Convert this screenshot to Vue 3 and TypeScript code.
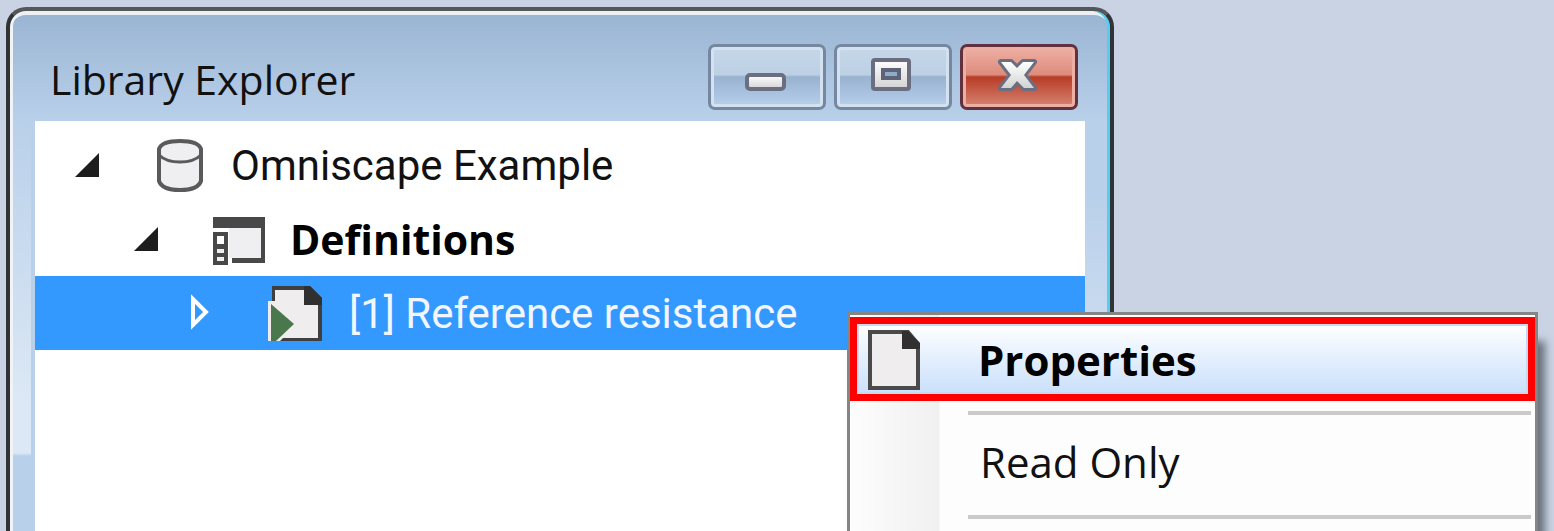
<script setup lang="ts">
import { ref } from 'vue'

type NodeKind = 'library' | 'definitions' | 'scenario'

interface TreeNode {
  id: number
  kind: NodeKind
  label: string
  expanded: boolean
}

const nodes = ref<TreeNode[]>([
  { id: 1, kind: 'library', label: 'Omniscape Example', expanded: true },
  { id: 2, kind: 'definitions', label: 'Definitions', expanded: true },
  { id: 3, kind: 'scenario', label: '[1] Reference resistance', expanded: false },
])
const selected = ref(3)
</script>

<template>
  <main class="desktop">
    <section class="window" aria-label="Library Explorer">
      <header class="titlebar">
        <h1 class="title">Library Explorer</h1>
        <div class="controls">
          <button class="control" type="button" aria-label="Minimize">
            <svg width="44" height="40" viewBox="0 0 44 40">
              <defs>
                <linearGradient id="glyph" x1="0" y1="0" x2="0" y2="1">
                  <stop offset="0" stop-color="#fff" />
                  <stop offset="1" stop-color="#d2d2d2" />
                </linearGradient>
              </defs>
              <rect x="2" y="18" width="37" height="14" rx="3" fill="url(#glyph)" stroke="#6a6e80" stroke-width="4" />
            </svg>
          </button>
          <button class="control" type="button" aria-label="Maximize">
            <svg width="44" height="40" viewBox="0 0 44 40">
              <rect x="2" y="3" width="36" height="29" rx="2" fill="url(#glyph)" stroke="#6a6e80" stroke-width="4" />
              <rect x="12" y="13" width="16" height="8" fill="#8eabc9" stroke="#5f6377" stroke-width="4" />
            </svg>
          </button>
          <button class="control close" type="button" aria-label="Close">
            <svg width="44" height="40" viewBox="0 0 44 40">
              <path class="cross" d="M4 5H14L20 11L26 5H37L27 18L37 31H27L20 24L14 31H4L14 18Z" fill="url(#glyph)" stroke="#6a6e80" stroke-width="6" stroke-linejoin="round" />
            </svg>
          </button>
        </div>
      </header>

      <ul class="tree" role="tree">
        <li
          v-for="node in nodes"
          :key="node.id"
          class="row"
          :class="[node.kind, { selected: node.id === selected }]"
          role="treeitem"
          :aria-expanded="node.expanded"
          :aria-selected="node.id === selected"
          @click="selected = node.id"
        >
          <button class="toggle" type="button" :aria-label="'Toggle ' + node.label" @click.stop="node.expanded = !node.expanded">
            <svg v-if="node.expanded" width="26" height="40" viewBox="0 0 26 40">
              <path d="M24 8V32H0Z" fill="#1d1d1d" />
            </svg>
            <svg v-else width="26" height="40" viewBox="0 0 26 40">
              <path d="M4 6V32L17 19Z" fill="none" stroke="#fff" stroke-width="4" />
            </svg>
          </button>

          <svg v-if="node.kind === 'library'" class="icon" width="56" height="60" viewBox="0 0 56 60">
            <path d="M6 14C8 8 16 6 27 6C38 6 46 8 48 14V46C46 52 38 55 27 55C16 55 8 52 6 46Z" fill="#efeef1" stroke="#5a5a5a" stroke-width="4" />
            <path d="M6 20C11 25 18 27 27 27C36 27 43 25 48 20" fill="none" stroke="#5a5a5a" stroke-width="3" />
          </svg>
          <svg v-else-if="node.kind === 'definitions'" class="icon" width="56" height="60" viewBox="0 0 56 60">
            <rect x="1" y="8" width="52" height="46" fill="#484848" />
            <rect x="17" y="19" width="32" height="30" fill="#efeef1" />
            <path d="M1 19H17V49H20V56H1Z" fill="#fff" />
            <rect x="1" y="23" width="15" height="33" fill="#484848" />
            <rect x="5" y="27" width="7" height="8" fill="#fff" />
            <rect x="5" y="40" width="7" height="4" fill="#eee" />
            <rect x="5" y="48" width="7" height="4" fill="#eee" />
          </svg>
          <svg v-else class="icon" width="56" height="60" viewBox="0 0 56 60">
            <path d="M5 3H43L55 15V58H5Z" fill="#3f3f3f" />
            <path d="M8 7H37V22H51V55H8Z" fill="#efeded" />
            <path d="M37 3H43L55 15V22H37Z" fill="#303030" />
            <path d="M1 18H8L29 42L13 58H1Z" fill="#efeded" />
            <path d="M4 21L27 41L9 58H4Z" fill="#4a774b" />
          </svg>
          <span class="label">{{ node.label }}</span>
        </li>
      </ul>
    </section>

    <div class="menu" role="menu">
      <button class="item primary" type="button" role="menuitem">
        <svg class="item-icon" width="56" height="64" viewBox="0 0 56 64">
          <path d="M4 5H42L52 17V61H4Z" fill="#efeded" stroke="#4a4a4a" stroke-width="4" />
          <path d="M36 4H42L54 16V22H36Z" fill="#303030" />
        </svg>
        <span>Properties</span>
      </button>
      <hr class="divider" />
      <button class="item" type="button" role="menuitem">
        <span>Read Only</span>
      </button>
      <hr class="divider last" />
    </div>
  </main>
</template>

<style>
body {
  margin: 0;
  overflow: hidden;
}
</style>

<style scoped>
.desktop {
  box-sizing: border-box;
  position: relative;
  display: flex;
  min-height: 100vh;
  padding: 7px 440px 0 6px;
  background: #cad3e3;
  color: #111;
  font-family: "Open Sans", "Noto Sans", sans-serif;
}

.window {
  flex: 1;
  display: flex;
  flex-direction: column;
  box-sizing: border-box;
  padding: 0 25px;
  border: 4px solid #303436;
  border-top-color: #555759;
  border-bottom: 0;
  border-radius: 20px 20px 0 0;
  background:
    linear-gradient(transparent 110px, #dce8f5 390px 442px, transparent 445px) 3px 0 / 18px 100% no-repeat,
    linear-gradient(transparent 180px, #c8daef 310px) right / 25px 100% no-repeat,
    linear-gradient(#99b4d2, #b9d0ea 110px);
  box-shadow: inset -3px 0 #55cdf0, inset 3px 0 #f1f3f6, inset 0 4px #edf0f2;
}

.titlebar {
  display: flex;
  justify-content: space-between;
  height: 110px;
}

.title {
  margin: 0;
  padding: 38px 0 0 15px;
  font-size: 41px;
  font-weight: 400;
  line-height: 60px;
  white-space: nowrap;
}

.controls {
  display: flex;
  align-items: flex-start;
  gap: 8px;
  padding: 33px 7px 0 0;
}

.control {
  display: flex;
  align-items: center;
  justify-content: center;
  box-sizing: border-box;
  width: 118px;
  height: 66px;
  padding: 0;
  border: 3px solid #75889f;
  border-radius: 7px;
  background: linear-gradient(#c6d7e9, #bdd0e4 46%, #98b2d0 50%, #b7d0ec);
  box-shadow: inset 0 0 0 3px #d3e1f0;
}

.close {
  border-color: #63303e;
  background: linear-gradient(#eeb0a5, #dd8c7c 46%, #b73c26 50%, #d78573);
  box-shadow: inset 0 0 0 3px #edafa3;
}

.cross {
  paint-order: stroke;
}

.tree {
  flex: 1;
  margin: 0;
  padding: 7px 0 0;
  background: #fff;
  list-style: none;
  font-family: Roboto, sans-serif;
}

.row {
  display: flex;
  align-items: center;
  height: 74px;
  padding-left: 40px;
  font-size: 42px;
  white-space: nowrap;
}

.definitions {
  padding-left: 99px;
  font-family: "Open Sans", sans-serif;
  font-size: 41px;
  font-weight: 700;
  color: #000;
}

.scenario {
  padding-left: 154px;
}

.selected {
  background: #3399ff;
  color: #f2f7ff;
}

.toggle {
  display: flex;
  padding: 0;
  border: 0;
  background: none;
}

.icon {
  margin-left: 52px;
}

.label {
  margin-left: 22px;
}

.scenario .label {
  margin-left: 26px;
}

.menu {
  position: absolute;
  top: 312px;
  right: 16px;
  bottom: 0;
  left: 847px;
  overflow: hidden;
  box-sizing: border-box;
  padding-top: 2px;
  border: 3px solid #858585;
  border-bottom: 0;
  background: linear-gradient(90deg, #fdfdfd, #f0f0f0 89px, #fdfdfd 90px);
  box-shadow: 8px 28px 8px -1px #69717c;
}

.item {
  display: flex;
  align-items: center;
  box-sizing: border-box;
  width: 100%;
  height: 96px;
  padding: 0 0 4px 130px;
  border: 0;
  background: none;
  color: #111;
  font: 400 42px "Open Sans", "Noto Sans", sans-serif;
}

.primary {
  height: 84px;
  padding: 0 0 0 9px;
  border: 7px solid #f00;
  background: linear-gradient(#fff, #c9dffb);
  box-shadow: inset 0 0 0 2px #c5d9f0;
  color: #000;
  font-weight: 700;
}

.item-icon {
  margin-right: 56px;
}

.divider {
  height: 4px;
  margin: 10px 4px 0 118px;
  border: 0;
  background: #cacaca;
}

.last {
  margin-top: 4px;
}
</style>
